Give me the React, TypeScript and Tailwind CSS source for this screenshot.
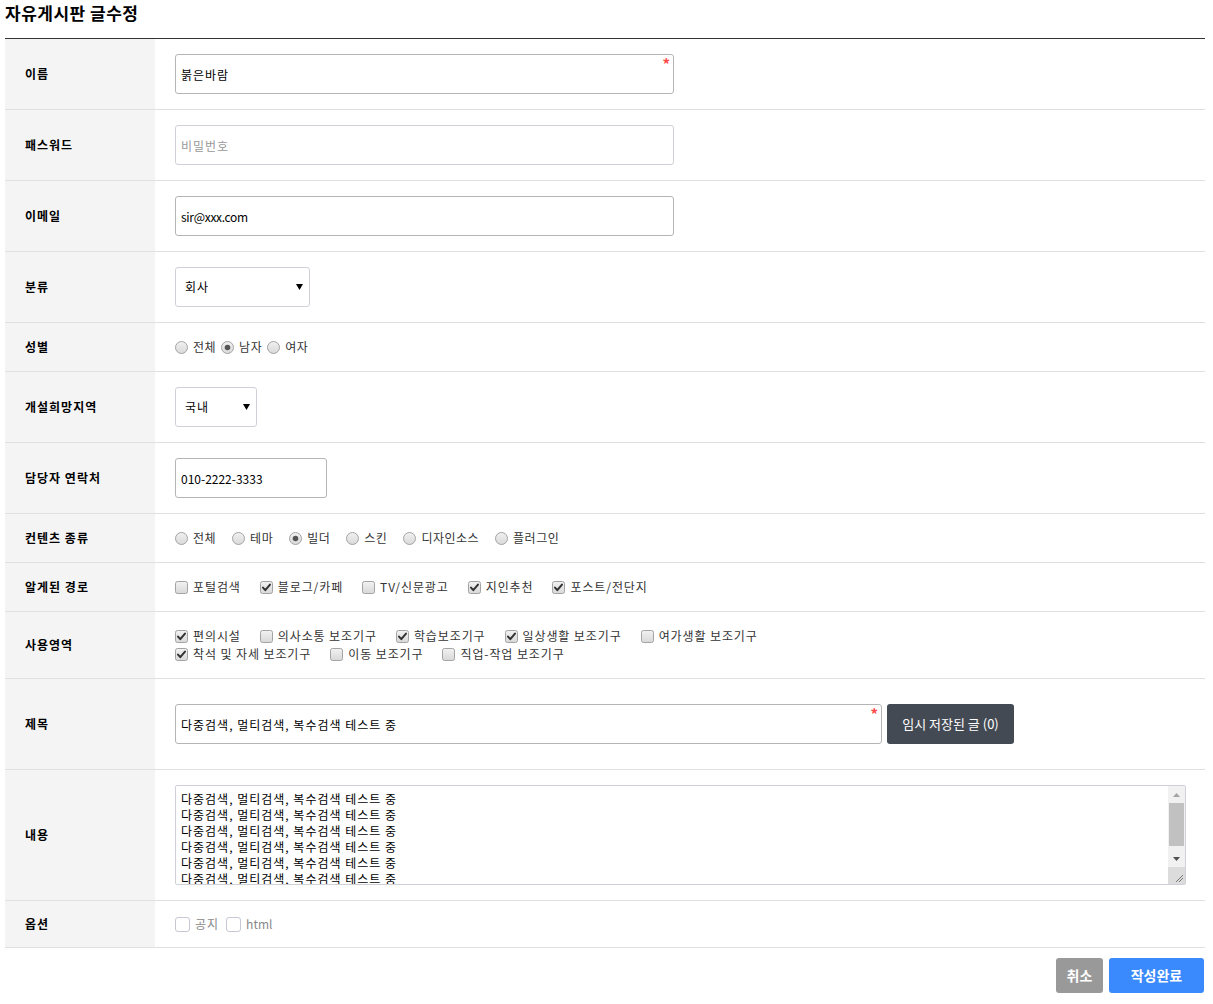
import React from 'react';

const font = "font-['Noto_Sans_CJK_KR','Noto_Sans',sans-serif]";

function Radio({ label, checked }: { label: string; checked?: boolean }) {
  return (
    <label className="flex items-center gap-[5px] text-[12px] tracking-[0.5px] text-[#333]">
      <svg width="13" height="13" viewBox="0 0 13 13">
        <defs>
          <linearGradient id="rg" x1="0" y1="0" x2="0" y2="1">
            <stop offset="0" stopColor="#f1f1f1" />
            <stop offset="1" stopColor="#d9d9d9" />
          </linearGradient>
        </defs>
        <circle cx="6.5" cy="6.5" r="6" fill="url(#rg)" stroke="#a3a3a3" />
        {checked && <circle cx="6.5" cy="6.5" r="2.8" fill="#555" />}
      </svg>
      <span>{label}</span>
    </label>
  );
}

function Check({ label, checked }: { label: string; checked?: boolean }) {
  return (
    <label className="flex items-center gap-[5px] text-[12px] tracking-[0.9px] text-[#333]">
      <svg width="13" height="13" viewBox="0 0 13 13">
        <defs>
          <linearGradient id="cg" x1="0" y1="0" x2="0" y2="1">
            <stop offset="0" stopColor="#f2f2f2" />
            <stop offset="1" stopColor="#d8d8d8" />
          </linearGradient>
        </defs>
        <rect x="0.5" y="0.5" width="12" height="12" rx="2" fill="url(#cg)" stroke="#a3a3a3" />
        {checked && (
          <path d="M3 6.6 L5.3 9.2 L10 3.6" fill="none" stroke="#333" strokeWidth="2" strokeLinecap="round" strokeLinejoin="round" />
        )}
      </svg>
      <span>{label}</span>
    </label>
  );
}

function Row({ label, children, className }: { label: string; children: React.ReactNode; className?: string }) {
  return (
    <div className="flex border-b border-[#e0e0e0]">
      <div className="w-[150px] shrink-0 bg-[#f4f4f4] pl-[20px] flex items-center text-[12px] tracking-[1px] font-bold text-[#000]">
        {label}
      </div>
      <div className={'flex-1 pl-[20px] ' + (className ?? 'py-[15px]')}>{children}</div>
    </div>
  );
}

function Select({ value, width }: { value: string; width: string }) {
  return (
    <div className={'relative h-[40px] ' + width}>
      <select
        defaultValue={value}
        className="w-full h-full appearance-none border border-[#d0d0d8] rounded-[3px] bg-white pl-[9px] text-[12px] tracking-[1px] text-[#000] outline-none"
      >
        <option>{value}</option>
      </select>
      <svg className="absolute right-[7px] top-[17px] pointer-events-none" width="7" height="6" viewBox="0 0 7 6">
        <path d="M0 0 H7 L3.5 6 Z" fill="#000" />
      </svg>
    </div>
  );
}

function Star() {
  return (
    <span className="absolute right-[4px] top-[3px] text-[15px] leading-[13px] font-bold text-[#ff4a4a]">*</span>
  );
}

const line = '다중검색, 멀티검색, 복수검색 테스트 중';

export default function App() {
  return (
    <div className={`w-[1200px] ml-[5px] ${font}`}>
      <div className="h-[39px] border-b border-[#333]">
        <h2 className="text-[17px] font-bold leading-[26px] tracking-[0.5px] text-[#000]">자유게시판 글수정</h2>
      </div>

      <Row label="이름">
        <div className="relative w-[499px] h-[40px]">
          <input
            defaultValue="붉은바람"
            className="w-full h-full border border-[#b5b5b5] rounded-[3px] px-[5px] text-[12px] tracking-[1px] text-[#000] outline-none"
          />
          <Star />
        </div>
      </Row>

      <Row label="패스워드">
        <input
          placeholder="비밀번호"
          className="w-[499px] h-[40px] border border-[#d0d0d8] rounded-[3px] px-[5px] text-[12px] tracking-[1px] outline-none placeholder:text-[#999]"
        />
      </Row>

      <Row label="이메일">
        <input
          defaultValue="sir@xxx.com"
          className="w-[499px] h-[40px] border border-[#b5b5b5] rounded-[3px] px-[5px] text-[12px] tracking-[-0.3px] text-[#000] outline-none"
        />
      </Row>

      <Row label="분류">
        <Select value="회사" width="w-[135px]" />
      </Row>

      <Row label="성별">
        <div className="flex items-center gap-[5px] h-[18px]">
          <Radio label="전체" />
          <Radio label="남자" checked />
          <Radio label="여자" />
        </div>
      </Row>

      <Row label="개설희망지역">
        <Select value="국내" width="w-[82px]" />
      </Row>

      <Row label="담당자 연락처">
        <input
          defaultValue="010-2222-3333"
          className="w-[152px] h-[40px] border border-[#b5b5b5] rounded-[3px] px-[5px] text-[12px] text-[#000] outline-none"
        />
      </Row>

      <Row label="컨텐츠 종류">
        <div className="flex items-center gap-[16px] h-[18px]">
          <Radio label="전체" />
          <Radio label="테마" />
          <Radio label="빌더" checked />
          <Radio label="스킨" />
          <Radio label="디자인소스" />
          <Radio label="플러그인" />
        </div>
      </Row>

      <Row label="알게된 경로">
        <div className="flex items-center gap-[19px] h-[18px]">
          <Check label="포털검색" />
          <Check label="블로그/카페" checked />
          <Check label="TV/신문광고" />
          <Check label="지인추천" checked />
          <Check label="포스트/전단지" checked />
        </div>
      </Row>

      <Row label="사용영역">
        <div className="flex items-center gap-[19px] h-[18px]">
          <Check label="편의시설" checked />
          <Check label="의사소통 보조기구" />
          <Check label="학습보조기구" checked />
          <Check label="일상생활 보조기구" checked />
          <Check label="여가생활 보조기구" />
        </div>
        <div className="flex items-center gap-[19px] h-[18px]">
          <Check label="착석 및 자세 보조기구" checked />
          <Check label="이동 보조기구" />
          <Check label="직업-작업 보조기구" />
        </div>
      </Row>

      <Row label="제목" className="py-[25px]">
        <div className="flex gap-[5px]">
          <div className="relative w-[707px] h-[40px]">
            <input
              defaultValue="다중검색, 멀티검색, 복수검색 테스트 중"
              className="w-full h-full border border-[#b5b5b5] rounded-[3px] px-[5px] text-[12px] tracking-[1px] text-[#000] outline-none"
            />
            <Star />
          </div>
          <button className="w-[127px] h-[40px] rounded-[3px] bg-[#434a54] text-white text-[13px]">
            임시 저장된 글 (0)
          </button>
        </div>
      </Row>

      <Row label="내용">
        <div className="relative w-[1011px] h-[100px]">
          <textarea
            defaultValue={Array(10).fill(line).join('\n')}
            className="block w-full h-full resize-none border border-[#d0d0d8] rounded-[2px] pl-[5px] pr-[20px] pt-[5px] text-[12px] leading-[16px] tracking-[1px] text-[#000] outline-none overflow-hidden"
          />
          {/* fake classic scrollbar */}
          <div className="absolute right-[1px] top-[1px] bottom-[1px] w-[17px] bg-[#f1f1f1] flex flex-col">
            <div className="h-[17px] flex items-center justify-center">
              <svg width="7" height="4" viewBox="0 0 7 4"><path d="M0 4 L3.5 0 L7 4 Z" fill="#a3a3a3" /></svg>
            </div>
            <div className="mx-[1px] h-[43px] bg-[#c1c1c1]" />
            <div className="flex-1" />
            <div className="h-[17px] flex items-center justify-center">
              <svg width="7" height="4" viewBox="0 0 7 4"><path d="M0 0 H7 L3.5 4 Z" fill="#505050" /></svg>
            </div>
            <div className="h-[17px] bg-[#dcdcdc] relative">
              <svg className="absolute right-[1px] bottom-[1px]" width="10" height="10" viewBox="0 0 10 10">
                <path d="M9 2 L2 9 M9 5 L5 9" stroke="#777" strokeWidth="1" />
              </svg>
            </div>
          </div>
        </div>
      </Row>

      <Row label="옵션">
        <div className="flex items-center gap-[5px] h-[16px] text-[12px] tracking-[1px] text-[#888]">
          <span className="w-[15px] h-[15px] border border-[#c8c8d4] rounded-[3px] bg-white" />
          <span>공지</span>
          <span className="ml-[2px] w-[15px] h-[15px] border border-[#c8c8d4] rounded-[3px] bg-white" />
          <span className="tracking-[0px]">html</span>
        </div>
      </Row>

      <div className="flex justify-end gap-[6px] mt-[10px] pr-[1px]">
        <button className="w-[47px] h-[35px] rounded-[3px] bg-[#999] text-white text-[14px] font-bold">취소</button>
        <button className="w-[95px] h-[35px] rounded-[3px] bg-[#3a8afd] text-white text-[14px] font-bold">작성완료</button>
      </div>
    </div>
  );
}
